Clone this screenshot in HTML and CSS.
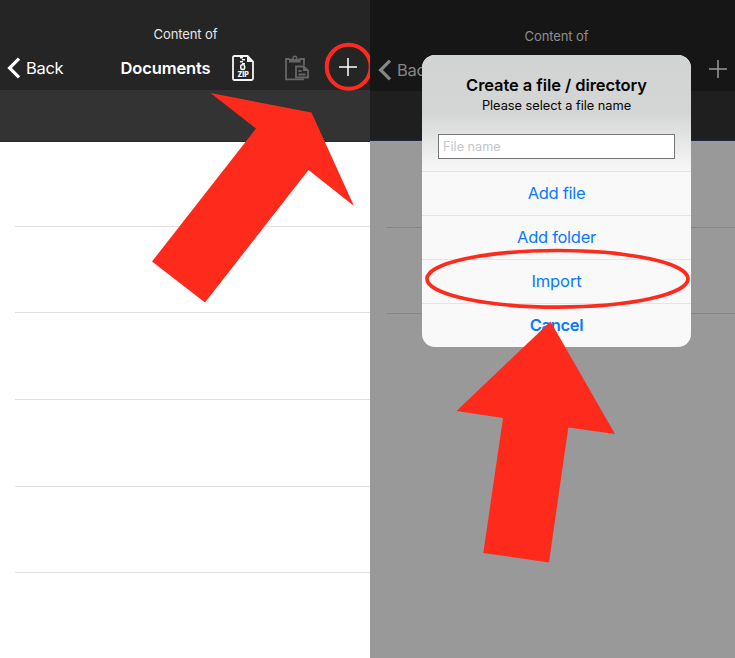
FILE: index.html
```
<!DOCTYPE html>
<html lang="en">
<head>
<meta charset="utf-8">
<title>Documents</title>
<link rel="stylesheet" href="styles.css">
</head>
<body>
<main class="board">
  <section class="phone">
    <header class="nav">
      <p class="nav-sub">Content of</p>
      <div class="nav-bar">
        <svg class="chevron" width="14" height="22" viewBox="0 0 14 22"><path d="M12 1.6 2.6 11 12 20.4"/></svg>
        <span class="back">Back</span>
        <h1 class="title">Documents</h1>
        <svg class="zip" width="22" height="26" viewBox="0 0 22 26">
          <path class="zip-page" d="M2.5 1H15.5L21 6.5V23.5Q21 25 19.5 25H2.5Q1 25 1 23.5V2.5Q1 1 2.5 1Z"/>
          <path class="zip-fold" d="M15 1V7H21Z"/>
          <path class="zip-teeth" d="M8 2.7h3M10 4.7h3M8 6.7h3M10 8.7h3"/>
          <rect class="zip-pull" x="8.8" y="9.8" width="3.8" height="4.6" rx="1.4"/>
          <text class="zip-label" x="5.4" y="21.8" textLength="11.4" lengthAdjust="spacingAndGlyphs">ZIP</text>
        </svg>
        <svg class="paste" width="24" height="26" viewBox="0 0 24 26">
          <path d="M10 24.3H1V4H4.5M14.5 4H19V10.500M1 24.3H19"/>
          <path class="paste-fill" fill-rule="evenodd" d="M4 7.500V3.800H7.200Q7.200 .4 9.800 .4T12.400 3.800H15.600V7.500ZM9.800 2A1.100 1.100 0 1 0 9.810 2Z"/>
          <path class="paste-doc" d="M11 11.500H18.500L23 15.500V22.500H11Z"/>
          <path class="paste-fill" d="M18 11V16H23Z"/>
          <path d="M13.500 16H16.500M13.500 19.500H20.500"/>
        </svg>
        <svg class="plus" width="18" height="18" viewBox="0 0 18 18"><path d="M9 0V18M0 9H18"/></svg>
      </div>
    </header>
    <div class="search"></div>
    <div class="rows"><i></i><i></i><i></i><i></i><i></i></div>
  </section>

  <section class="phone dimmed">
    <header class="nav">
      <p class="nav-sub">Content of</p>
      <div class="nav-bar">
        <svg class="chevron" width="14" height="22" viewBox="0 0 14 22"><path d="M12 1.6 2.6 11 12 20.4"/></svg>
        <span class="back">Back</span>
        <svg class="plus" width="18" height="18" viewBox="0 0 18 18"><path d="M9 0V18M0 9H18"/></svg>
      </div>
    </header>
    <div class="search"></div>
    <div class="rows"><i></i><i></i></div>
  </section>

  <div class="dialog">
    <div class="dialog-head">
      <h2>Create a file / directory</h2>
      <p>Please select a file name</p>
      <div class="field">File name</div>
    </div>
    <div class="action">Add file</div>
    <div class="action">Add folder</div>
    <div class="action import">Import</div>
    <div class="action cancel">Cancel</div>
  </div>

  <svg class="marks" width="370" height="658" viewBox="0 0 370 658">
    <circle class="ring" cx="348.7" cy="66.8" r="22"/>
    <path class="arrow" d="M210.500 93 311.500 112.500 354 206 308.500 170 205 302.500 152 261.500 256 128.500Z"/>
  </svg>
  <svg class="marks" width="735" height="658" viewBox="0 0 735 658">
    <ellipse class="ring thin" cx="557.500" cy="278.800" rx="130.500" ry="28.300"/>
    <path class="arrow" d="M550.500 321.500 615 434 568.300 427.500 549 562.500 483.300 553 503 418 456.500 411Z"/>
  </svg>
</main>
</body>
</html>
```
FILE: styles.css
```
* { box-sizing: border-box; margin: 0; padding: 0; }
body { font-family: Inter, "Liberation Sans", sans-serif; overflow: hidden; }
svg { display: block; flex: none; }
span, h1, h2, p { white-space: nowrap; }

.board { position: relative; display: flex; width: 735px; height: 658px; overflow: hidden; }
.phone { display: flex; flex-direction: column; width: 370px; background: #fff; overflow: hidden; color: #fff; }

.nav { height: 90px; background: #252525; padding-top: 25px; }
.nav-sub { height: 18px; line-height: 18px; padding-left: 1px; font-size: 13px; letter-spacing: -0.1px; text-align: center; color: #e6e6e6; }
.nav-bar { display: flex; align-items: center; height: 50px; padding-left: 7px; }
.chevron { fill: none; stroke: #fff; stroke-width: 3.2; }
.back { margin-left: 5px; width: 94.5px; font-size: 16.5px; letter-spacing: -0.3px; }
.title { width: 111px; font-size: 16.5px; font-weight: 600; letter-spacing: -0.12px; }
.zip-page { fill: none; stroke: #f4f4f4; stroke-width: 1.8; }
.zip-fold, .zip-label { fill: #f4f4f4; }
.zip-teeth { stroke: #f4f4f4; stroke-width: 1.5; }
.zip-pull { fill: #252525; stroke: #f4f4f4; stroke-width: 1.6; }
.zip-label { font: 900 7px Inter, sans-serif; }
.paste { margin-left: 31px; fill: none; stroke: #666; stroke-width: 1.8; }
.paste-fill { fill: #666; stroke: none; }
.paste-doc { fill: #252525; }
.plus { margin: 0 0 2px 30px; fill: none; stroke: #fff; stroke-width: 1.5; }

.search { height: 52px; background: #333; border-bottom: 1px solid #292929; }
.rows { padding-left: 15px; }
.rows i { display: block; height: 86.7px; border-bottom: 1px solid #e1e1e3; }
.rows i:first-child { height: 84.5px; }

.dimmed { width: 365px; background: #999; }
.dimmed .nav { height: 91px; background: #161616; padding-top: 27px; }
.dimmed .nav-sub { color: #8e8e8e; padding-left: 8px; }
.dimmed .chevron { stroke: #868686; }
.dimmed .back { color: #868686; width: 300px; }
.dimmed .plus { margin: 0 0 3px 12px; stroke: #999; }
.dimmed .nav-bar { padding-left: 8px; }
.dimmed .search { height: 50px; background: #1f1f1f; border-bottom: 1px solid #252a44; }
.dimmed .rows { padding-left: 16px; }
.dimmed .rows i { border-color: #868686; }
.dimmed .rows i:first-child { height: 86.5px; }

.dialog { position: absolute; left: 422px; top: 55px; width: 269px; height: 292px; border-radius: 13px; overflow: hidden; background: #f9f9f9; color: #0a7aff; text-align: center; }
.dialog-head { height: 116px; padding: 19px 16px 0; color: #050505; background: linear-gradient(#d2d3d3 0, #d4d5d5 50%, #e4e5e5 72%, #f7f7f7 100%); }
.dialog h2 { height: 22px; line-height: 22px; font-size: 16.5px; font-weight: 600; letter-spacing: -0.08px; }
.dialog p { height: 20px; line-height: 20px; font-size: 12.8px; letter-spacing: -0.03px; }
.field { display: flex; align-items: center; height: 25px; margin-top: 18px; padding: 0 0 1px 4px; border: 1px solid #77777a; background: #fff; color: #c6c6cb; font-size: 12.7px; }
.action { height: 44px; line-height: 43px; border-top: 1px solid #e4e4e5; font-size: 16.5px; letter-spacing: -0.28px; }
.import { letter-spacing: -0.1px; }
.cancel { font-weight: 600; }

.marks { position: absolute; left: 0; top: 0; }
.ring { fill: none; stroke: #fe2b1d; stroke-width: 4; }
.thin { stroke-width: 3.7; }
.arrow { fill: #fe2b1d; }
```
